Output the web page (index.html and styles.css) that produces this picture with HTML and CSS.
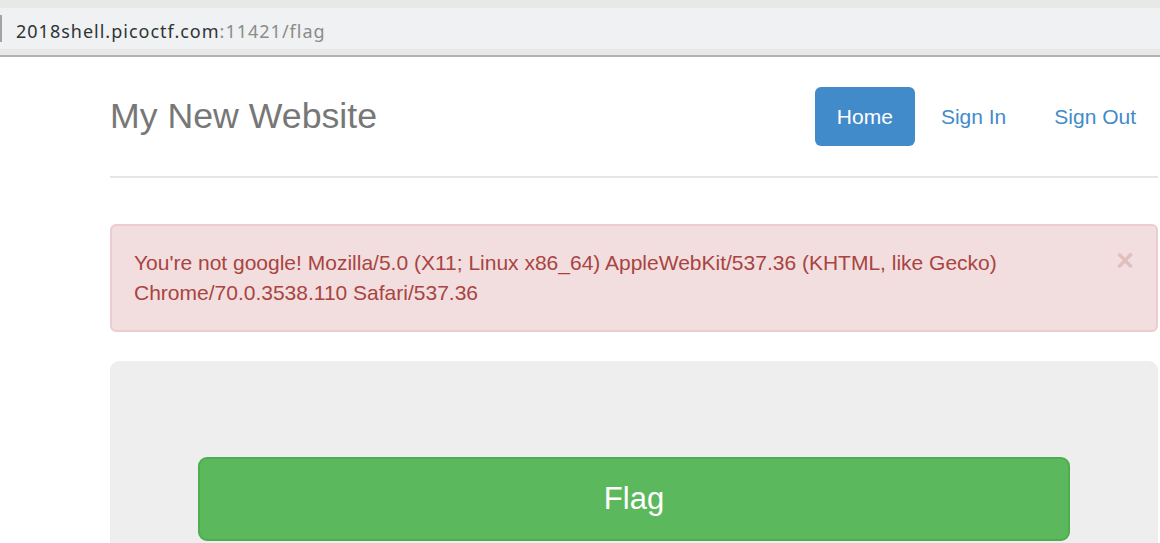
FILE: index.html
```html
<!DOCTYPE html>
<html lang="en">
<head>
<meta charset="utf-8">
<title>My New Website</title>
<link rel="stylesheet" href="styles.css">
</head>
<body>
<div class="chrome">
  <div class="chrome-top"></div>
  <div class="urlbar">
    <span class="url-edge"></span>
    <span class="url-host">2018shell.picoctf.com</span><span class="url-rest">:11421/flag</span>
  </div>
  <div class="chrome-bottom"></div>
</div>
<div class="page">
  <div class="container">
    <div class="header">
      <h3 class="brand">My New Website</h3>
      <ul class="nav">
        <li><a class="pill active" href="#">Home</a></li>
        <li><a class="pill" href="#">Sign In</a></li>
        <li><a class="pill" href="#">Sign Out</a></li>
      </ul>
    </div>
    <div class="alert">
      <div class="alert-text">You're not google! Mozilla/5.0 (X11; Linux x86_64) AppleWebKit/537.36 (KHTML, like Gecko) Chrome/70.0.3538.110 Safari/537.36</div>
      <button class="close" type="button">×</button>
    </div>
    <div class="jumbotron">
      <a class="btn-flag" href="#">Flag</a>
    </div>
  </div>
</div>
</body>
</html>
```

FILE: styles.css
```css
html, body {
  margin: 0;
  padding: 0;
  overflow: hidden;
  background: #fff;
}
body {
  font-family: "Liberation Sans", Arial, sans-serif;
}
.chrome-top {
  height: 8px;
  background: #e8e8e7;
}
.urlbar {
  height: 41px;
  background: #f0f1f3;
  display: flex;
  align-items: center;
  font-family: "Noto Sans", "DejaVu Sans", sans-serif;
  font-size: 18px;
  letter-spacing: 1px;
}
.url-edge {
  width: 2px;
  height: 27px;
  background: #a3a3a3;
  margin-right: 14px;
}
.url-host {
  color: #2e3436;
  padding-top: 4px;
}
.url-rest {
  color: #8a8c88;
  padding-top: 4px;
}
.chrome-bottom {
  height: 6px;
  background: #e8e8e7;
  border-bottom: 2px solid #b2b2b2;
}
.page {
  padding-top: 30px;
}
.container {
  margin-left: 110px;
  width: 1048px;
}
.header {
  display: flex;
  justify-content: space-between;
  align-items: center;
  padding-bottom: 30px;
  border-bottom: 2px solid #e5e5e5;
  margin-bottom: 46px;
}
.brand {
  margin: 0;
  font-size: 35.7px;
  font-weight: normal;
  line-height: 59px;
  color: #777;
}
.nav {
  display: flex;
  gap: 4px;
  list-style: none;
  margin: 0;
  padding: 0;
}
.pill {
  display: block;
  padding: 0 22px;
  line-height: 59px;
  font-size: 21px;
  color: #428bca;
  text-decoration: none;
  border-radius: 6px;
}
.pill.active {
  background: #428bca;
  color: #fff;
}
.alert {
  display: flex;
  align-items: flex-start;
  background: #f2dede;
  border: 2px solid #ebccd1;
  border-radius: 6px;
  color: #a94442;
  padding: 22px;
  font-size: 21px;
  line-height: 30px;
  margin-bottom: 29px;
}
.alert-text {
  flex: 1;
  padding-right: 40px;
}
.close {
  flex: none;
  margin: -3px 0 0 0;
  padding: 0;
  border: 0;
  background: none;
  font-family: "Liberation Sans", Arial, sans-serif;
  font-size: 31px;
  font-weight: bold;
  line-height: 1;
  color: inherit;
  opacity: 0.2;
  text-shadow: 0 1px 0 #fff;
  cursor: pointer;
}
.jumbotron {
  background: #eee;
  border-radius: 9px;
  padding: 96px 88px 70px;
}
.btn-flag {
  display: flex;
  align-items: center;
  justify-content: center;
  height: 84px;
  box-sizing: border-box;
  background: #5cb85c;
  border: 2px solid #4cae4c;
  border-radius: 9px;
  color: #fff;
  font-size: 31px;
  text-decoration: none;
}
```
